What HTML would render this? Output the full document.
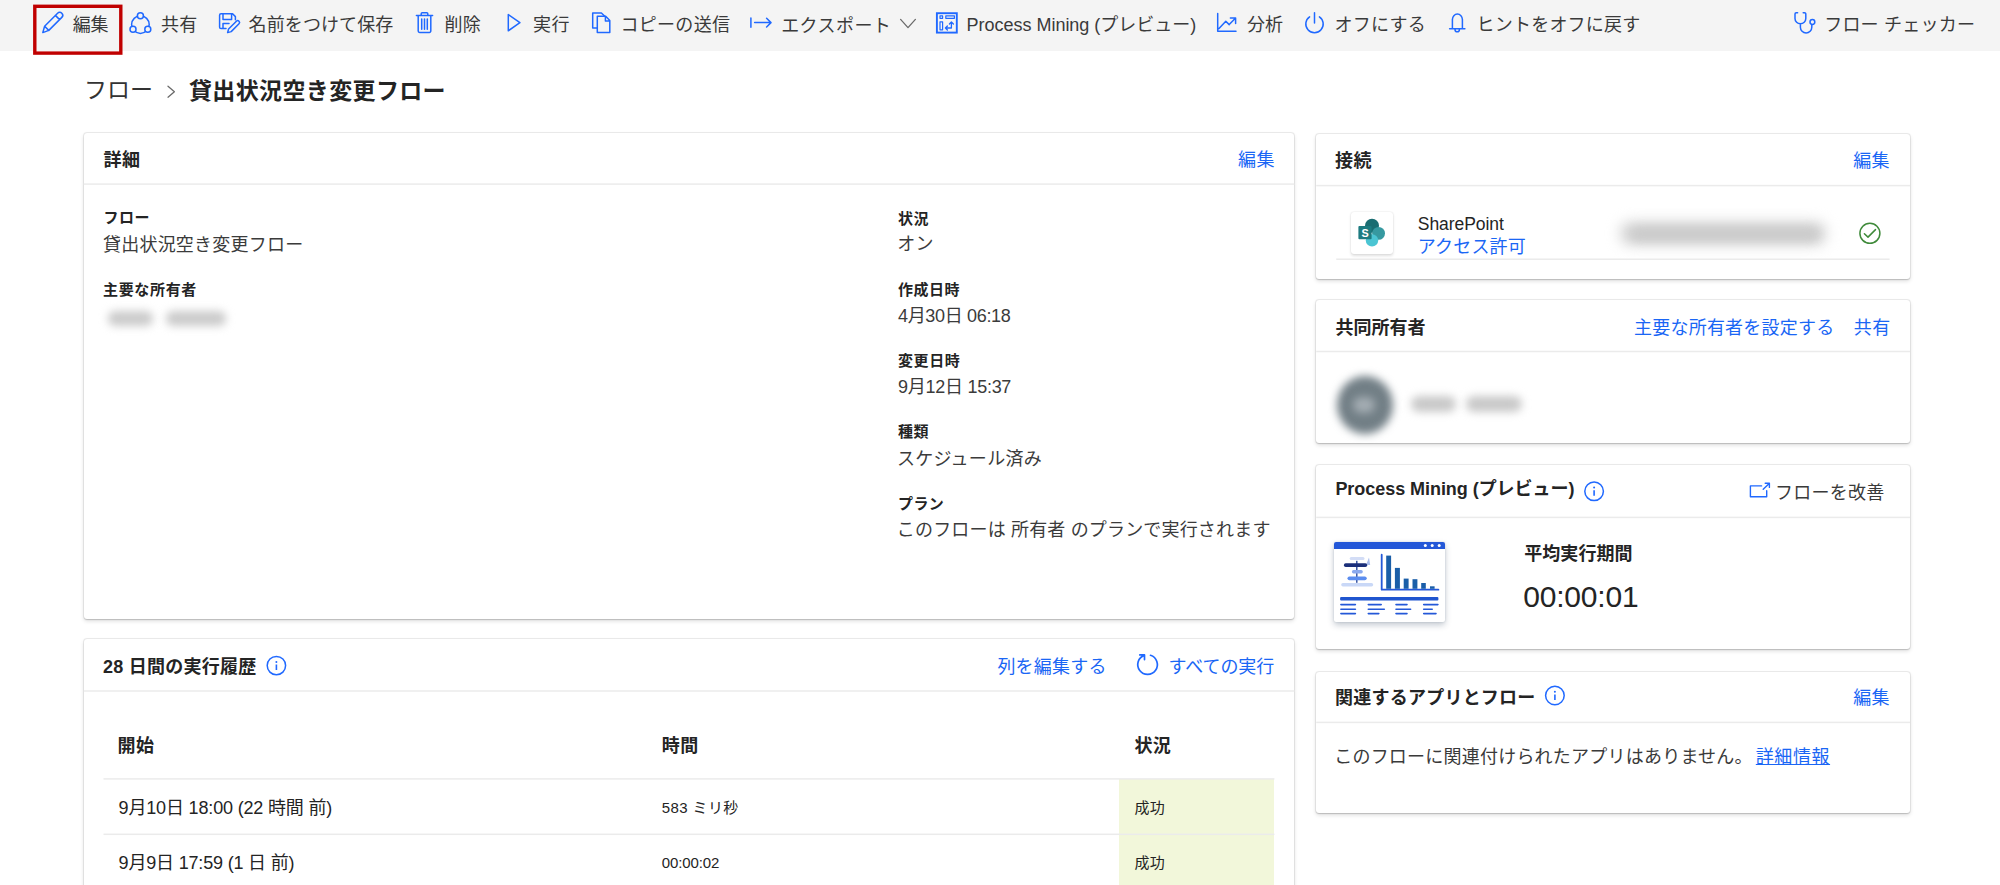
<!DOCTYPE html>
<html lang="ja">
<head>
<meta charset="utf-8">
<title>貸出状況空き変更フロー</title>
<style>
html,body{margin:0;padding:0;}
body{width:2000px;height:885px;overflow:hidden;background:#fff;position:relative;font-family:"Liberation Sans","Noto Sans CJK JP",sans-serif;color:#242424;}
.t{position:absolute;white-space:nowrap;line-height:1;}
.abs{position:absolute;}
#bar{position:absolute;left:0;top:0;width:2000px;height:51px;background:#f4f4f4;}
.card{position:absolute;background:#fff;border-radius:3px;box-shadow:0 2px 4.5px rgba(0,0,0,.14),0 .4px 1.2px rgba(0,0,0,.13),0 0 0 1px rgba(0,0,0,.055);}
.sep{position:absolute;height:1.3px;background:#eeeeee;}
svg{position:absolute;overflow:visible;}
.ic{fill:none;stroke:#2069ff;stroke-width:1.5;stroke-linecap:round;stroke-linejoin:round;}
.blur{position:absolute;filter:blur(4px);}
</style>
</head>
<body>
<div id="bar"></div>
<svg width="2000" height="885" viewBox="0 0 2000 885" style="left:0;top:0;"><rect x="34.8" y="6.3" width="86" height="46.8" fill="none" stroke="#c00000" stroke-width="3.4"/></svg>
<div class="card" style="left:83.8px;top:132.8px;width:1210.5px;height:485.8px;"></div>
<div class="card" style="left:83.8px;top:639.3px;width:1210.5px;height:320.70000000000005px;"></div>
<div class="card" style="left:1316.2px;top:134.2px;width:593.8px;height:145.2px;"></div>
<div class="card" style="left:1316.2px;top:300.2px;width:593.8px;height:143.0px;"></div>
<div class="card" style="left:1316.2px;top:465.4px;width:593.8px;height:183.39999999999998px;"></div>
<div class="card" style="left:1316.2px;top:671.6px;width:593.8px;height:141.60000000000002px;"></div>
<!-- table -->
<div class="abs" style="left:1119.2px;top:779.4px;width:155.2px;height:110px;background:#f2f7da;"></div>
<!-- connection row -->
<div class="abs" style="left:1351px;top:211.8px;width:41.8px;height:41.8px;border-radius:3px;background:#fff;box-shadow:0 1.5px 3px rgba(0,0,0,.12),0 0 1.5px rgba(0,0,0,.12);"></div>
<svg width="2000" height="885" viewBox="0 0 2000 885" style="left:0;top:0;">
  <circle cx="1372" cy="225.7" r="7" fill="#1a6d72"/>
  <circle cx="1378.6" cy="233.4" r="6.4" fill="#3699a0"/>
  <circle cx="1372" cy="240.4" r="6.2" fill="#4bc5d3"/>
  <rect x="1358.4" y="226.1" width="13.2" height="13.2" rx="1" fill="#1d7b80"/>
  <text x="1365.1" y="236.7" text-anchor="middle" font-family="Liberation Sans, sans-serif" font-weight="700" font-size="10.8" fill="#fff">S</text>
</svg>
<!-- blurred placeholders -->
<div class="blur" style="left:1620px;top:222px;width:206px;height:23px;border-radius:11px;background:#d2d2d2;filter:blur(7px);"></div>
<div class="blur" style="left:1632px;top:228px;width:186px;height:12px;border-radius:6px;background:#cbcbcb;filter:blur(5px);"></div>
<div class="blur" style="left:108px;top:311px;width:45px;height:15px;border-radius:7px;background:#cbcbcb;"></div>
<div class="blur" style="left:166px;top:311px;width:60px;height:15px;border-radius:7px;background:#cbcbcb;"></div>
<div class="blur" style="left:1336.6px;top:376px;width:56px;height:58px;border-radius:50%;background:#727f86;filter:blur(4px);"></div>
<div class="blur" style="left:1353px;top:397px;width:22px;height:16px;border-radius:8px;background:#a4adb3;filter:blur(4px);"></div>
<div class="blur" style="left:1411px;top:396px;width:45px;height:16px;border-radius:8px;background:#c9c9c9;filter:blur(4.5px);"></div>
<div class="blur" style="left:1466px;top:396px;width:56px;height:16px;border-radius:8px;background:#c9c9c9;filter:blur(4.5px);"></div>
<!-- process mining thumbnail -->
<div class="abs" style="left:1334px;top:542.1px;width:110.5px;height:79.5px;border-radius:2px;background:#fff;box-shadow:0 3px 6px rgba(40,60,90,.28),0 0 2px rgba(40,60,90,.18);overflow:hidden;">
  <div class="abs" style="left:0;top:0;width:100%;height:6.9px;background:#2458d8;"></div>
</div>
<svg width="2000" height="885" viewBox="0 0 2000 885" style="left:0;top:0;">
  <g fill="#fff"><circle cx="1425.3" cy="545.6" r="1.5"/><circle cx="1432.2" cy="545.6" r="1.5"/><circle cx="1439.2" cy="545.6" r="1.5"/></g>
  <rect x="1349.7" y="556.9" width="14.8" height="3.1" rx="1.5" fill="#d3ddf6"/>
  <path d="M1366 565 L1369 557.5 L1370.2 565 Z" fill="#a9bdec"/>
  <rect x="1356.1" y="560.8" width="1.4" height="22" fill="#2b4a9b"/>
  <rect x="1343.9" y="563.3" width="23.3" height="3.7" rx="1.8" fill="#1b2f7a"/>
  <rect x="1351.9" y="570.1" width="10.9" height="3.3" rx="1.6" fill="#8aa9ee"/>
  <rect x="1347.5" y="576.4" width="19.2" height="3.8" rx="1.9" fill="#5b8def"/>
  <rect x="1341.2" y="583" width="32" height="3.5" rx="1.7" fill="#c9d8f7"/>
  <path d="M1381.7 554.7 V589.7 H1438.4" fill="none" stroke="#2458d8" stroke-width="1.8" stroke-linecap="round" stroke-linejoin="round"/>
  <g fill="#1a5ea8">
    <rect x="1386.2" y="555.6" width="4.9" height="33.2"/>
    <rect x="1394.9" y="567.9" width="5" height="20.9"/>
    <rect x="1403.7" y="578.6" width="4.9" height="10.2"/>
    <rect x="1412.5" y="579.2" width="4.9" height="9.6"/>
    <rect x="1421.2" y="583" width="4.6" height="5.8"/>
    <rect x="1430" y="586.3" width="4.6" height="2.5"/>
  </g>
  <rect x="1340.1" y="596.9" width="98.3" height="3.6" rx="1" fill="#1f55cf"/>
  <g stroke="#2458d8" stroke-width="1.6" stroke-linecap="round">
    <path d="M1340.9 604.6 H1355.4 M1340.9 609.2 H1355.4 M1340.9 613.6 H1355.4"/>
    <path d="M1368.3 604.6 H1381.2 M1368.3 609.2 H1384.3 M1368.3 613.6 H1378.8"/>
    <path d="M1396 604.6 H1407 M1396 609.2 H1410.6 M1396 613.6 H1407"/>
    <path d="M1423.7 604.6 H1437.9 M1423.7 609.2 H1432.2 M1423.7 613.6 H1436"/>
  </g>
</svg>

<svg width="2000" height="885" viewBox="0 0 2000 885" style="left:0;top:0;"><g fill="#ebebeb"><rect x="83.8" y="183.35" width="1210.5" height="1.5"/><rect x="83.8" y="690.25" width="1210.5" height="1.5"/><rect x="1316.2" y="184.85" width="593.8" height="1.5"/><rect x="1316.2" y="350.75" width="593.8" height="1.5"/><rect x="1316.2" y="516.65" width="593.8" height="1.5"/><rect x="1316.2" y="721.65" width="593.8" height="1.5"/><rect x="103.5" y="778.15" width="1170.9" height="1.5"/><rect x="103.5" y="833.55" width="1170.9" height="1.5"/><rect x="1336.2" y="258.45" width="553.4" height="1.5"/></g></svg>
<svg width="2000" height="885" viewBox="0 0 2000 885" style="left:0;top:0;">
<g class="ic">
  <!-- pencil -->
  <path d="M42.8 32.6 L44.6 26.2 L57.6 13.2 a2.9 2.9 0 0 1 4.2 4.2 L48.8 30.4 Z M44.6 26.2 L48.8 30.4 M55.4 15.4 L59.6 19.6"/>
  <!-- share -->
  <circle cx="140.4" cy="24.6" r="8.8"/>
  <g fill="#f4f4f4"><circle cx="140.4" cy="15.7" r="3"/><circle cx="133" cy="29.2" r="3"/><circle cx="147.8" cy="29.2" r="3"/></g>
  <!-- save as -->
  <path d="M226 28.6 H221 a1.4 1.4 0 0 1 -1.4 -1.4 V15.2 a1.4 1.4 0 0 1 1.4 -1.4 H232.6 L235.4 16.6 V19.8 M223 13.8 V19.4 H231.6 V13.8 M223 28.6 V23.6 H229"/>
  <path d="M227.6 32.6 L228.6 29 L236.4 21.2 a1.8 1.8 0 0 1 2.6 2.6 L231.2 31.6 Z"/>
  <!-- trash -->
  <path d="M416.4 15.4 H432.6 M421.2 15.4 V13.8 a1 1 0 0 1 1 -1 H426.8 a1 1 0 0 1 1 1 V15.4 M418.2 15.4 V31 a1.4 1.4 0 0 0 1.4 1.4 H429.4 a1.4 1.4 0 0 0 1.4 -1.4 V15.4 M421.7 19 V29.2 M424.5 19 V29.2 M427.3 19 V29.2"/>
  <!-- play -->
  <path d="M508.3 14.6 L519.9 22.7 L508.3 30.8 Z"/>
  <!-- copy -->
  <path d="M597.3 28 H592.7 V13 H601.4 L604.8 16.3"/>
  <path d="M597.3 16.3 H605.7 L609.8 20.6 V32.4 H597.3 Z M605.4 16.6 V20.9 H609.5"/>
  <!-- export -->
  <path d="M750.9 18 V27.2 M754.6 22.6 H770.8 M766.6 18.2 L771 22.6 L766.6 27"/>
  <!-- process mining -->
  <rect x="936.9" y="13.2" width="19.9" height="19.4" stroke-width="1.9" stroke-linejoin="miter"/>
  <path d="M940 15.9 h2.6 v2.4 h-2.6z M945.8 15.9 h8.6 v2.4 h-8.6z M940 21.8 h2.6 v8 h-2.6z" stroke-width="1.2"/>
  <path d="M945.4 28 H951.4 V22 M947.4 26 L945.4 28 L947.4 30 M949.4 24 L951.4 22 L953.4 24" stroke-width="1.3"/>
  <!-- analytics -->
  <path d="M1217.7 13.6 V31.3 H1236 M1219 28.6 L1225.8 21.2 L1229.2 24.6 L1235.4 18.2 M1230.4 17.9 H1235.6 V23.4"/>
  <!-- power -->
  <path d="M1314.5 12.8 V23 M1309.6 16.8 A8.7 8.7 0 1 0 1319.4 16.8"/>
  <!-- bell -->
  <path d="M1449.6 28.7 H1464.9 M1452.4 28.7 V19.6 a5 5.5 0 0 1 10 0 V28.7 M1455 29.4 a2.2 2.4 0 0 0 4.4 0"/>
  <!-- stethoscope -->
  <path d="M1797.6 12.8 H1796.2 a1.2 1.2 0 0 0 -1.2 1.2 V18.4 a5.4 5.4 0 0 0 10.8 0 V14 a1.2 1.2 0 0 0 -1.2 -1.2 H1803.2 M1800.4 23.8 V27.2 a5.7 5.7 0 0 0 11.4 0 V24.6"/>
  <circle cx="1812.4" cy="22" r="2.4"/>
  <!-- refresh -->
  <path d="M1150.5 655.3 A9.8 9.8 0 1 1 1144.3 655.4 M1139.8 654.9 H1144.5 V659.6" stroke-width="1.7"/>
  <!-- external link -->
  <path d="M1761.6 485.9 H1750.4 V496.7 H1766.7 V490.8 M1763.2 489.3 L1769.2 483.4 M1765.2 483.2 H1769.4 V487.4" stroke-width="1.4"/>
  <!-- info icons -->
  <circle cx="276.4" cy="665.6" r="9.2"/>
  <circle cx="1594.1" cy="491.3" r="9.3"/>
  <circle cx="1554.9" cy="695.5" r="9.3"/>
  <path d="M276.4 664.6 V670 M1594.1 490.3 V495.7 M1554.9 694.5 V699.9" stroke-width="1.6" stroke-linecap="butt"/>
</g>
<g fill="#2069ff"><circle cx="276.4" cy="661.9" r="1"/><circle cx="1594.1" cy="487.6" r="1"/><circle cx="1554.9" cy="691.8" r="1"/></g>
<path d="M900.6 19.4 L908 27.6 L915.4 19.4" fill="none" stroke="#6a6a6a" stroke-width="1.3" stroke-linecap="round" stroke-linejoin="round"/>
<path d="M168 86.2 L174.4 91.7 L168 97.2" fill="none" stroke="#6a6a6a" stroke-width="1.3" stroke-linecap="round" stroke-linejoin="round"/>
<!-- check -->
<circle cx="1869.9" cy="233.3" r="10" fill="none" stroke="#3f8a3a" stroke-width="1.5"/>
<path d="M1864.4 233.8 L1868 237.1 L1875.5 229.6" fill="none" stroke="#3f8a3a" stroke-width="1.5" stroke-linecap="round" stroke-linejoin="round"/>
</svg>

<div class="t" id="tb1" style="left:72.80px;top:16.00px;font-size:18px;letter-spacing:-0.270px;color:#3a3a3a">編集</div>
<div class="t" id="tb2" style="left:161.00px;top:16.00px;font-size:18px;letter-spacing:0.140px;color:#3a3a3a">共有</div>
<div class="t" id="tb3" style="left:248.60px;top:16.00px;font-size:18px;letter-spacing:0.103px;color:#3a3a3a">名前をつけて保存</div>
<div class="t" id="tb4" style="left:444.40px;top:16.00px;font-size:18px;letter-spacing:0.400px;color:#3a3a3a">削除</div>
<div class="t" id="tb5" style="left:533.00px;top:16.00px;font-size:18px;letter-spacing:0.400px;color:#3a3a3a">実行</div>
<div class="t" id="tb6" style="left:620.40px;top:16.00px;font-size:18px;letter-spacing:0.324px;color:#3a3a3a">コピーの送信</div>
<div class="t" id="tb7" style="left:781.20px;top:17.00px;font-size:18px;letter-spacing:0.432px;color:#3a3a3a">エクスポート</div>
<div class="t" id="tb8" style="left:966.60px;top:16.00px;font-size:18px;letter-spacing:-0.021px;color:#3a3a3a">Process Mining (プレビュー)</div>
<div class="t" id="tb9" style="left:1247.00px;top:16.00px;font-size:18px;letter-spacing:0.000px;color:#3a3a3a">分析</div>
<div class="t" id="tb10" style="left:1334.40px;top:16.00px;font-size:18px;letter-spacing:0.293px;color:#3a3a3a">オフにする</div>
<div class="t" id="tb11" style="left:1476.60px;top:16.00px;font-size:18px;letter-spacing:0.202px;color:#3a3a3a">ヒントをオフに戻す</div>
<div class="t" id="tb12" style="left:1824.20px;top:16.00px;font-size:18px;letter-spacing:0.214px;color:#3a3a3a">フロー チェッカー</div>
<div class="t" id="bc1" style="left:84.00px;top:79.00px;font-size:23px;letter-spacing:0.000px;color:#333">フロー</div>
<div class="t" id="bc2" style="left:189.00px;top:80.00px;font-size:23px;letter-spacing:0.360px;font-weight:700;color:#242424">貸出状況空き変更フロー</div>
<div class="t" id="h1" style="left:103.60px;top:151.00px;font-size:18px;letter-spacing:0.360px;font-weight:700">詳細</div>
<div class="t" id="l1" style="left:1238.00px;top:151.00px;font-size:18px;letter-spacing:0.400px;color:#1a66f5">編集</div>
<div class="t" id="d1" style="left:103.60px;top:210.00px;font-size:15px;letter-spacing:0.400px;font-weight:700">フロー</div>
<div class="t" id="d2" style="left:103.00px;top:236.00px;font-size:18px;letter-spacing:0.216px;color:#3b3b3b">貸出状況空き変更フロー</div>
<div class="t" id="d3" style="left:103.00px;top:282.00px;font-size:15px;letter-spacing:0.666px;font-weight:700">主要な所有者</div>
<div class="t" id="d4" style="left:898.00px;top:211.00px;font-size:15px;letter-spacing:0.400px;font-weight:700">状況</div>
<div class="t" id="d5" style="left:897.20px;top:235.00px;font-size:18px;letter-spacing:0.400px;color:#3b3b3b">オン</div>
<div class="t" id="d6" style="left:898.00px;top:282.00px;font-size:15px;letter-spacing:0.510px;font-weight:700">作成日時</div>
<div class="t" id="d7" style="left:898.00px;top:307.00px;font-size:18px;letter-spacing:-0.333px;color:#3b3b3b">4月30日 06:18</div>
<div class="t" id="d8" style="left:898.00px;top:353.00px;font-size:15px;letter-spacing:0.600px;font-weight:700">変更日時</div>
<div class="t" id="d9" style="left:898.00px;top:378.00px;font-size:18px;letter-spacing:-0.270px;color:#3b3b3b">9月12日 15:37</div>
<div class="t" id="d10" style="left:898.00px;top:424.00px;font-size:15px;letter-spacing:0.400px;font-weight:700">種類</div>
<div class="t" id="d11" style="left:897.00px;top:450.00px;font-size:18px;letter-spacing:0.283px;color:#3b3b3b">スケジュール済み</div>
<div class="t" id="d12" style="left:898.00px;top:496.00px;font-size:15px;letter-spacing:0.400px;font-weight:700">プラン</div>
<div class="t" id="d13" style="left:896.80px;top:521.00px;font-size:18px;letter-spacing:0.171px;color:#3b3b3b">このフローは 所有者 のプランで実行されます</div>
<div class="t" id="h2" style="left:103.00px;top:658.00px;font-size:18px;letter-spacing:0.255px;font-weight:700">28 日間の実行履歴</div>
<div class="t" id="l2" style="left:997.40px;top:658.00px;font-size:18px;letter-spacing:0.216px;color:#1a66f5">列を編集する</div>
<div class="t" id="l3" style="left:1168.60px;top:658.00px;font-size:18px;letter-spacing:-0.072px;color:#1a66f5">すべての実行</div>
<div class="t" id="th1" style="left:117.60px;top:737.00px;font-size:18px;letter-spacing:0.400px;font-weight:700">開始</div>
<div class="t" id="th2" style="left:661.80px;top:737.00px;font-size:18px;letter-spacing:0.400px;font-weight:700">時間</div>
<div class="t" id="th3" style="left:1134.40px;top:737.00px;font-size:18px;letter-spacing:0.400px;font-weight:700">状況</div>
<div class="t" id="r1a" style="left:118.60px;top:799.00px;font-size:18px;letter-spacing:-0.167px;">9月10日 18:00 (22 時間 前)</div>
<div class="t" id="r1b" style="left:661.80px;top:800.00px;font-size:15px;letter-spacing:0.390px;">583 ミリ秒</div>
<div class="t" id="r1c" style="left:1134.40px;top:800.00px;font-size:15px;letter-spacing:0.400px;">成功</div>
<div class="t" id="r2a" style="left:118.60px;top:854.00px;font-size:18px;letter-spacing:-0.185px;">9月9日 17:59 (1 日 前)</div>
<div class="t" id="r2b" style="left:661.80px;top:855.00px;font-size:15px;letter-spacing:-0.129px;">00:00:02</div>
<div class="t" id="r2c" style="left:1134.40px;top:855.00px;font-size:15px;letter-spacing:0.400px;">成功</div>
<div class="t" id="h3" style="left:1335.00px;top:152.00px;font-size:18px;letter-spacing:0.400px;font-weight:700">接続</div>
<div class="t" id="l4" style="left:1853.20px;top:152.00px;font-size:18px;letter-spacing:0.400px;color:#1a66f5">編集</div>
<div class="t" id="sp1" style="left:1417.80px;top:216.00px;font-size:17.5px;letter-spacing:-0.070px;">SharePoint</div>
<div class="t" id="sp2" style="left:1417.80px;top:238.00px;font-size:18px;letter-spacing:0.180px;color:#1a66f5">アクセス許可</div>
<div class="t" id="h4" style="left:1335.60px;top:319.00px;font-size:18px;letter-spacing:-0.023px;font-weight:700">共同所有者</div>
<div class="t" id="l5" style="left:1634.00px;top:319.00px;font-size:18px;letter-spacing:0.225px;color:#1a66f5">主要な所有者を設定する</div>
<div class="t" id="l6" style="left:1853.80px;top:319.00px;font-size:18px;letter-spacing:0.400px;color:#1a66f5">共有</div>
<div class="t" id="h5" style="left:1335.40px;top:480.00px;font-size:18px;letter-spacing:-0.047px;font-weight:700">Process Mining (プレビュー)</div>
<div class="t" id="pm1" style="left:1775.00px;top:484.00px;font-size:18px;letter-spacing:0.270px;color:#3a3a3a">フローを改善</div>
<div class="t" id="pm2" style="left:1524.20px;top:545.00px;font-size:18px;letter-spacing:0.072px;font-weight:700">平均実行期間</div>
<div class="t" id="pm3" style="left:1523.20px;top:582.00px;font-size:30px;letter-spacing:-0.180px;color:#242424">00:00:01</div>
<div class="t" id="h6" style="left:1335.00px;top:689.00px;font-size:18px;letter-spacing:0.234px;font-weight:700">関連するアプリとフロー</div>
<div class="t" id="l7" style="left:1853.20px;top:689.00px;font-size:18px;letter-spacing:0.400px;color:#1a66f5">編集</div>
<div class="t" id="rl1" style="left:1334.20px;top:748.00px;font-size:18px;letter-spacing:0.221px;color:#3a3a3a">このフローに関連付けられたアプリはありません。</div>
<div class="t" id="rl2" style="left:1755.80px;top:748.00px;font-size:18px;letter-spacing:0.570px;color:#1a66f5;text-decoration:underline">詳細情報</div>
</body>
</html>
